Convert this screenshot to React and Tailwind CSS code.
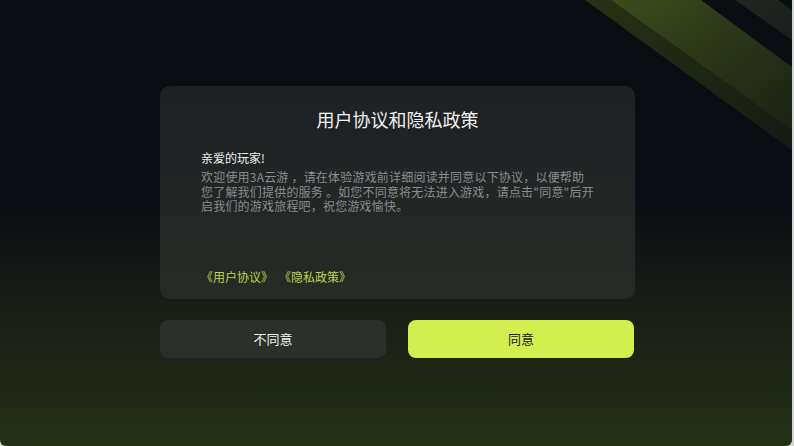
import React from "react";

const Stripes = () => (
  <svg
    className="absolute right-0 top-0"
    width="220"
    height="160"
    viewBox="574 0 220 160"
  >
    <defs>
      <linearGradient id="bright" x1="0" y1="0" x2="1" y2="1">
        <stop offset="0" stopColor="#3e4c1b" />
        <stop offset="0.5" stopColor="#2b3517" />
        <stop offset="1" stopColor="#1b2215" />
      </linearGradient>
      <linearGradient id="dim" x1="0" y1="0" x2="1" y2="1">
        <stop offset="0" stopColor="#283214" />
        <stop offset="1" stopColor="#141a14" />
      </linearGradient>
      <linearGradient id="gray" x1="0" y1="0" x2="1" y2="1">
        <stop offset="0" stopColor="#20261f" />
        <stop offset="1" stopColor="#1a1f1c" />
      </linearGradient>
    </defs>
    <polygon points="587,0 613,0 794,130 794,150" fill="url(#dim)" />
    <polygon points="613,0 703,0 794,67 794,130" fill="url(#bright)" />
    <polygon points="737,0 780,0 794,10 794,40" fill="url(#gray)" />
  </svg>
);

const App = () => {
  return (
    <div
      className="h-[446px] w-[794px] bg-[#d4d4d4]"
      style={{ fontFamily: '"Noto Sans CJK SC", "Noto Sans", sans-serif' }}
    >
      <div className="relative h-[446px] w-[792px] overflow-hidden rounded-b-[6px] bg-gradient-to-b from-[#0a0e13] from-45% via-[#171b16] via-65% to-[#263016]">
        <Stripes />
        <div className="relative ml-[160px] flex w-[475px] flex-col pt-[86px]">
          <div className="flex h-[213px] flex-col rounded-[10px] bg-gradient-to-b from-[#1e2124] to-[#272b26] px-[41px]">
            <h1 className="mt-[21px] text-center text-[18px] leading-[24px] text-[#f2f2f2]">
              用户协议和隐私政策
            </h1>
            <p className="mt-[19px] text-[12px] leading-[15px] text-[#ececec]">
              亲爱的玩家!
            </p>
            <p className="mt-[5px] whitespace-nowrap text-[12px] leading-[14.5px] tracking-[0.2px] text-[#8a8d90]">
              欢迎使用3A云游 ，请在体验游戏前详细阅读并同意以下协议，以便帮助
              <br />
              您了解我们提供的服务 。如您不同意将无法进入游戏，请点击"同意"后开
              <br />
              启我们的游戏旅程吧，祝您游戏愉快。
            </p>
            <div className="mt-auto mb-[14px] flex gap-[6px] text-[12px] leading-[16px] text-[#bcd447]">
              <span>《用户协议》</span>
              <span>《隐私政策》</span>
            </div>
          </div>
          <div className="mt-[21px] flex w-[474px] gap-[22px]">
            <button className="flex h-[38px] flex-1 items-center justify-center rounded-[8px] bg-[#2b302a] text-[13px] text-[#f0f0f0]">
              不同意
            </button>
            <button className="flex h-[38px] flex-1 items-center justify-center rounded-[8px] bg-[#d3ee4f] text-[13px] text-[#1c1f12]">
              同意
            </button>
          </div>
        </div>
      </div>
    </div>
  );
};

export default App;
